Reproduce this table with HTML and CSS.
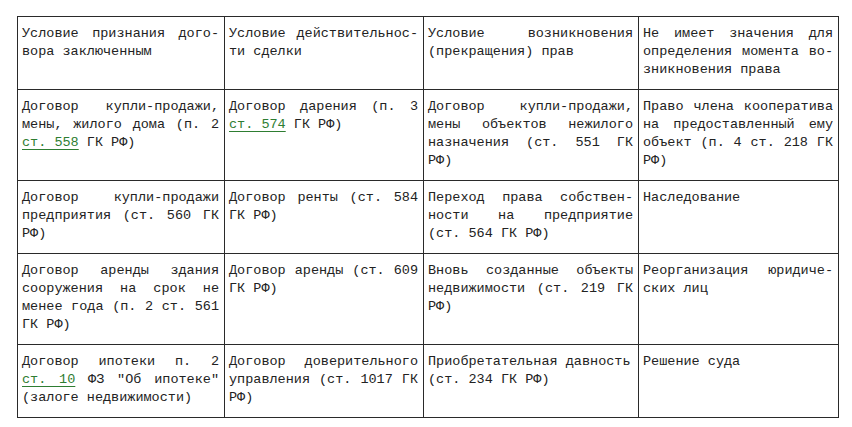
FILE: index.html
```html
<!DOCTYPE html>
<html lang="ru">
<head>
<meta charset="utf-8">
<link rel="stylesheet" href="styles.css">
</head>
<body>
<table class="grid">
  <colgroup>
    <col class="c1"><col class="c2"><col class="c3"><col class="c4">
  </colgroup>
  <tr class="r3">
    <td><span class="j">Условие признания дого-</span><span class="e">вора заключенным</span></td>
    <td><span class="j">Условие действительнос-</span><span class="e">ти сделки</span></td>
    <td><span class="j">Условие возникновения</span><span class="e">(прекращения) прав</span></td>
    <td><span class="j">Не имеет значения для</span><span class="j">определения момента во-</span><span class="e">зникновения права</span></td>
  </tr>
  <tr class="r4">
    <td><span class="j">Договор купли-продажи,</span><span class="j">мены, жилого дома (п. 2</span><span class="e"><a class="lnk">ст. 558</a> ГК РФ)</span></td>
    <td><span class="j">Договор дарения (п. 3</span><span class="e"><a class="lnk">ст. 574</a> ГК РФ)</span></td>
    <td><span class="j">Договор купли-продажи,</span><span class="j">мены объектов нежилого</span><span class="j">назначения (ст. 551 ГК</span><span class="e">РФ)</span></td>
    <td><span class="j">Право члена кооператива</span><span class="j">на предоставленный ему</span><span class="j">объект (п. 4 ст. 218 ГК</span><span class="e">РФ)</span></td>
  </tr>
  <tr class="r3">
    <td><span class="j">Договор купли-продажи</span><span class="j">предприятия (ст. 560 ГК</span><span class="e">РФ)</span></td>
    <td><span class="j">Договор ренты (ст. 584</span><span class="e">ГК РФ)</span></td>
    <td><span class="j">Переход права собствен-</span><span class="j">ности на предприятие</span><span class="e">(ст. 564 ГК РФ)</span></td>
    <td><span class="e">Наследование</span></td>
  </tr>
  <tr class="r4">
    <td><span class="j">Договор аренды здания</span><span class="j">сооружения на срок не</span><span class="j">менее года (п. 2 ст. 561</span><span class="e">ГК РФ)</span></td>
    <td><span class="j">Договор аренды (ст. 609</span><span class="e">ГК РФ)</span></td>
    <td><span class="j">Вновь созданные объекты</span><span class="j">недвижимости (ст. 219 ГК</span><span class="e">РФ)</span></td>
    <td><span class="j">Реорганизация юридиче-</span><span class="e">ских лиц</span></td>
  </tr>
  <tr class="r3">
    <td><span class="j">Договор ипотеки п. 2</span><span class="j"><a class="lnk">ст. 10</a> ФЗ "Об ипотеке"</span><span class="e">(залоге недвижимости)</span></td>
    <td><span class="j">Договор доверительного</span><span class="j">управления (ст. 1017 ГК</span><span class="e">РФ)</span></td>
    <td><span class="e">Приобретательная давность</span><span class="e">(ст. 234 ГК РФ)</span></td>
    <td><span class="e">Решение суда</span></td>
  </tr>
</table>
</body>
</html>
```

FILE: styles.css
```css
html, body {
  margin: 0;
  padding: 0;
  background: #ffffff;
}
body {
  font-family: "Liberation Mono", "Courier New", monospace;
  font-size: 13.5px;
  line-height: 18px;
  color: #222222;
}
.grid {
  margin: 16px 0 0 17px;
  width: 821px;
  border-collapse: collapse;
  table-layout: fixed;
}
.c1 { width: 207px; }
.c2 { width: 199px; }
.c3 { width: 215px; }
.c4 { width: 200px; }
.grid td {
  border: 1px solid #2a2a2a;
  vertical-align: top;
  padding: 8px 5px 10px 4px;
}
.r3 td { height: 53px; }
.r4 td { height: 71px; }
.j {
  display: block;
  text-align: justify;
  text-align-last: justify;
  white-space: nowrap;
}
.e {
  display: block;
  text-align: left;
  white-space: nowrap;
}
.lnk {
  color: #2e7d32;
  text-decoration: underline;
  text-underline-offset: 3px;
}
```
